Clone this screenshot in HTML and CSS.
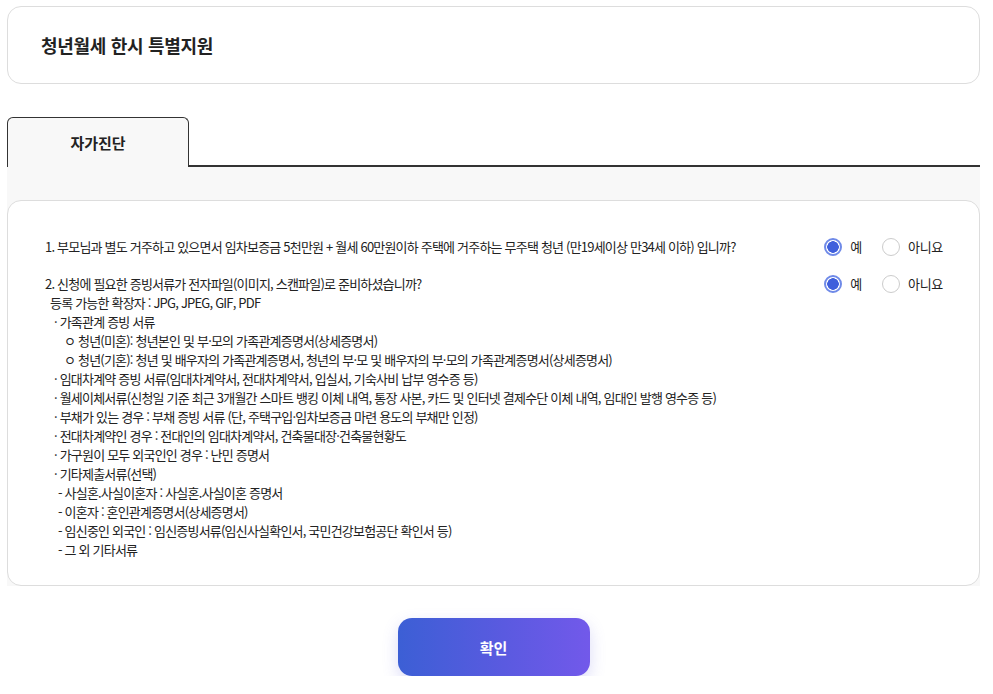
FILE: index.html
```html
<!DOCTYPE html>
<html lang="ko">

<head>
  <meta charset="UTF-8">
  <meta name="viewport" content="width=device-width, initial-scale=1.0">
  <title>청년월세 한시 특별지원</title>
  <link rel="stylesheet" href="styles.css">
</head>

<body>
  <div class="wrap">
    <header class="head">
      <h1>청년월세 한시 특별지원</h1>
    </header>

    <div class="tabs">
      <div class="tab">자가진단</div>
      <div class="tab-line"></div>
    </div>

    <section class="panel">
      <div class="card">
        <div class="q">
          <div class="q-text">1. 부모님과 별도 거주하고 있으면서 임차보증금 5천만원 + 월세 60만원이하 주택에 거주하는 무주택 청년 (만19세이상 만34세 이하) 입니까?</div>
          <div class="choice">
            <label class="radio"><input type="radio" name="q1" checked><span>예</span></label>
            <label class="radio"><input type="radio" name="q1"><span>아니요</span></label>
          </div>
        </div>

        <div class="q">
          <div class="q-text">
            2. 신청에 필요한 증빙서류가 전자파일(이미지, 스캔파일)로 준비하셨습니까?
            <div class="ext">등록 가능한 확장자 : JPG, JPEG, GIF, PDF</div>
            <ul class="docs">
              <li>· 가족관계 증빙 서류</li>
              <li class="sub">ㅇ 청년(미혼): 청년본인 및 부·모의 가족관계증명서(상세증명서)</li>
              <li class="sub">ㅇ 청년(기혼): 청년 및 배우자의 가족관계증명서, 청년의 부·모 및 배우자의 부·모의 가족관계증명서(상세증명서)</li>
              <li>· 임대차계약 증빙 서류(임대차계약서, 전대차계약서, 입실서, 기숙사비 납부 영수증 등)</li>
              <li>· 월세이체서류(신청일 기준 최근 3개월간 스마트 뱅킹 이체 내역, 통장 사본, 카드 및 인터넷 결제수단 이체 내역, 임대인 발행 영수증 등)</li>
              <li>· 부채가 있는 경우 : 부채 증빙 서류 (단, 주택구입·임차보증금 마련 용도의 부채만 인정)</li>
              <li>· 전대차계약인 경우 : 전대인의 임대차계약서, 건축물대장·건축물현황도</li>
              <li>· 가구원이 모두 외국인인 경우 : 난민 증명서</li>
              <li>· 기타제출서류(선택)</li>
              <li class="etc">- 사실혼.사실이혼자 : 사실혼.사실이혼 증명서</li>
              <li class="etc">- 이혼자 : 혼인관계증명서(상세증명서)</li>
              <li class="etc">- 임신중인 외국인 : 임신증빙서류(임신사실확인서, 국민건강보험공단 확인서 등)</li>
              <li class="etc">- 그 외 기타서류</li>
            </ul>
          </div>
          <div class="choice">
            <label class="radio"><input type="radio" name="q2" checked><span>예</span></label>
            <label class="radio"><input type="radio" name="q2"><span>아니요</span></label>
          </div>
        </div>
      </div>
    </section>

    <div class="btn-row">
      <button class="btn" type="button">확인</button>
    </div>
  </div>
</body>

</html>
```

FILE: styles.css
```css
* {
  box-sizing: border-box;
}

body {
  margin: 0;
  font-family: "Noto Sans CJK KR", "Noto Sans", sans-serif;
  color: #222;
  background: #fff;
}

.wrap {
  margin: 6px 13px 0 7px;
}

.head {
  height: 78px;
  padding: 0 33px;
  display: flex;
  align-items: center;
  border: 1px solid #ddd;
  border-radius: 14px;
}

.head h1 {
  margin: 0;
  font-size: 18px;
  font-weight: 700;
  letter-spacing: -0.3px;
}

.tabs {
  display: flex;
  margin-top: 33px;
}

.tab {
  width: 182px;
  height: 50px;
  display: flex;
  align-items: center;
  justify-content: center;
  font-size: 15px;
  font-weight: 700;
  background: #f8f8f8;
  border: 1px solid #333;
  border-bottom: none;
  border-radius: 6px 6px 0 0;
}

.tab-line {
  flex: 1;
  border-bottom: 2px solid #333;
}

.panel {
  background: #f8f8f8;
  padding-top: 33px;
}

.card {
  background: #fff;
  border: 1px solid #ddd;
  border-radius: 14px;
  padding: 36px 36px 26px 37px;
  font-size: 13px;
  line-height: 19px;
  letter-spacing: -0.8px;
}

.q {
  display: flex;
  align-items: flex-start;
}

.q + .q {
  margin-top: 18px;
}

.q-text {
  flex: 1;
}

.ext {
  padding-left: 5px;
}

.docs {
  list-style: none;
  margin: 0;
  padding: 0 0 0 9px;
}

.docs .sub {
  padding-left: 10px;
}

.docs .etc {
  padding-left: 4px;
}

.choice {
  display: flex;
  gap: 20px;
  letter-spacing: -0.3px;
}

.radio {
  display: flex;
  align-items: center;
  gap: 8px;
  cursor: pointer;
}

.radio input {
  appearance: none;
  margin: 0;
  width: 18px;
  height: 18px;
  border: 1px solid #ccc;
  border-radius: 50%;
  background: #fff;
}

.radio input:checked {
  border: 2px solid #6f8ae8;
  background: radial-gradient(circle, #3f5fdc 0 5.5px, #fff 6px);
}

.btn-row {
  display: flex;
  justify-content: center;
  margin-top: 32px;
}

.btn {
  width: 192px;
  height: 58px;
  border: none;
  border-radius: 14px;
  color: #fff;
  font-family: inherit;
  font-size: 15px;
  font-weight: 700;
  background: linear-gradient(90deg, #3c5fd5 0%, #5a5ae0 55%, #7259ea 100%);
  box-shadow: 0 6px 16px rgba(90, 90, 220, 0.22);
}
```
